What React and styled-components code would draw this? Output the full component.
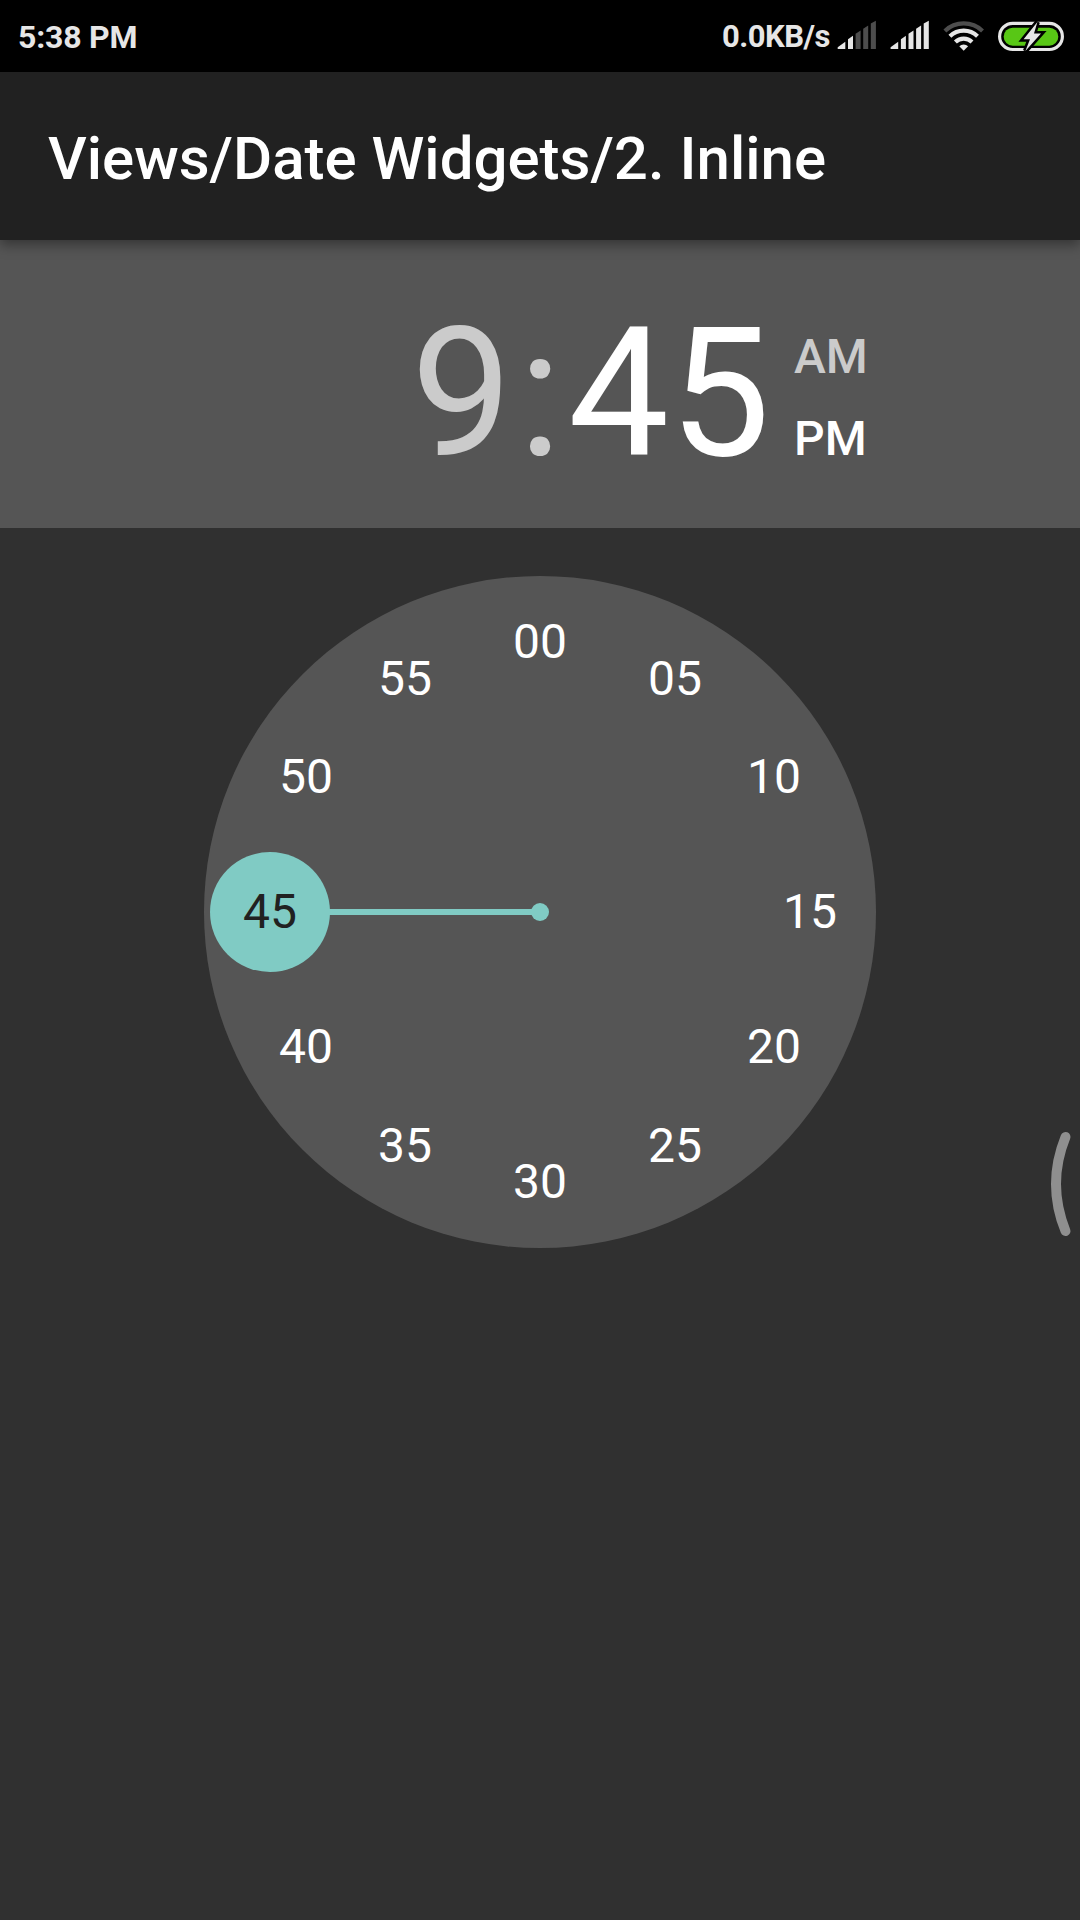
import React from "react";
import styled, { createGlobalStyle } from "styled-components";

const GlobalStyle = createGlobalStyle`
  body { margin: 0; background: #303030; }
  * { box-sizing: border-box; }
`;

const Screen = styled.div`
  display: flex;
  flex-direction: column;
  width: 1080px;
  height: 1920px;
  overflow: hidden;
  background: #303030;
  font-family: Roboto, "Noto Sans", sans-serif;
  color: #fff;
`;

const StatusBar = styled.header`
  display: flex;
  justify-content: space-between;
  flex: none;
  height: 72px;
  padding: 0 14px 0 18px;
  background: #000;
  color: #e6e6e6;
`;

const StatusText = styled.span`
  font-size: ${(p) => p.$size}px;
  line-height: ${(p) => p.$line}px;
  font-weight: 700;
  letter-spacing: ${(p) => p.$tracking}px;
  white-space: pre;
`;

const StatusGroup = styled.div`
  display: flex;
`;

const StatusIcons = styled.svg`
  display: block;
  margin-left: 4px;
`;

const AppBar = styled.div`
  display: flex;
  align-items: center;
  flex: none;
  height: 168px;
  padding: 6px 48px 0;
  background: #212121;
  box-shadow: 0 5px 12px rgba(0, 0, 0, 0.38);
  z-index: 1;
`;

const Title = styled.h1`
  margin: 0;
  font-size: 60px;
  line-height: 70px;
  font-weight: 500;
  white-space: nowrap;
`;

const TimeHeader = styled.section`
  display: flex;
  flex: none;
  height: 288px;
  padding: 48px 0 0 411px;
  background: #555;
`;

const TimePart = styled.span`
  font-size: 180px;
  line-height: 211px;
  width: ${(p) => p.$width}px;
  text-align: center;
  color: ${(p) => (p.$active ? "#fff" : "#cbcbcb")};
`;

const Meridiem = styled.div`
  display: flex;
  flex-direction: column;
  padding: 28px 0 0 24px;
`;

const MeridiemOption = styled.span`
  font-size: 48px;
  line-height: 82px;
  font-weight: 500;
  color: ${(p) => (p.$active ? "#fff" : "#cbcbcb")};
`;

const DialArea = styled.main`
  display: flex;
  justify-content: center;
  padding-top: 48px;
`;

const Dial = styled.svg`
  display: block;
`;

const DialNumber = styled.text`
  font-size: 48px;
  text-anchor: middle;
  fill: ${(p) => (p.$active ? "#212121" : "#fff")};
`;

const EdgeHandle = styled.svg`
  position: absolute;
  left: 1040px;
  top: 1120px;
`;

const minutes = ["00", "05", "10", "15", "20", "25", "30", "35", "40", "45", "50", "55"];

const Signal = ({ x, strength }) => (
  <g transform={`translate(${x} 0)`}>
    {[
      "M0 49V47.2L7.6 41.8V49Z",
      "M10.3 49V39.2L15.3 35.8V49Z",
      "M17.9 49V33.8L22.9 30.4V49Z",
      "M25.5 49V28.8L30.5 25.4V49Z",
      "M33.1 49V23.6L38.2 20.8V49Z",
    ].map((d, i) => (
      <path key={d} d={d} fill={i < strength ? "#e6e6e6" : "#4d4d4d"} />
    ))}
  </g>
);

export default function App() {
  return (
    <Screen>
      <GlobalStyle />
      <StatusBar>
        <StatusText $size={32} $line={74} $tracking={-0.2}>5:38 PM</StatusText>
        <StatusGroup>
          <StatusText $size={31} $line={73} $tracking={-0.5}>0.0KB/s</StatusText>
          <StatusIcons width="232" height="72" viewBox="834 0 232 72">
            <Signal x={837.7} strength={2} />
            <Signal x={890.6} strength={5} />
            <g fill="none" strokeWidth="4.2" stroke="#e6e6e6">
              <path d="M944.9 30.9A27.3 27.3 0 0 1 982.5 30.9" stroke="#4d4d4d" />
              <path d="M949.9 36.2A20 20 0 0 1 977.5 36.2" />
              <path d="M955.4 42A12 12 0 0 1 972 42" />
              <path d="M963.7 50.7L959.3 46.2A6.3 6.3 0 0 1 968.1 46.2Z" fill="#e6e6e6" stroke="none" />
            </g>
            <rect x="999.6" y="23.3" width="62.8" height="26.2" rx="13.1" fill="none" stroke="#e6e6e6" strokeWidth="3.2" />
            <rect x="1003.7" y="27.7" width="54.6" height="18" rx="9" fill="#58c715" />
            <path
              d="M1037.4 22L1023.6 39.2H1030L1025.4 51L1041 33.6H1034Z"
              fill="#e6e6e6"
              stroke="#000"
              strokeWidth="5"
              paintOrder="stroke"
            />
          </StatusIcons>
        </StatusGroup>
      </StatusBar>
      <AppBar>
        <Title>Views/Date Widgets/2. Inline</Title>
      </AppBar>
      <TimeHeader>
        <TimePart $width={101}>9</TimePart>
        <TimePart $width={56}>:</TimePart>
        <TimePart $width={202} $active>45</TimePart>
        <Meridiem>
          <MeridiemOption>AM</MeridiemOption>
          <MeridiemOption $active>PM</MeridiemOption>
        </Meridiem>
      </TimeHeader>
      <DialArea>
        <Dial width="672" height="672" viewBox="-336 -336 672 672">
          <circle r="336" fill="#555" />
          <g fill="#80cbc4">
            <rect x="-270" y="-3" width="270" height="6" />
            <circle r="9" />
            <circle cx="-270" r="60" />
          </g>
          {minutes.map((m, i) => {
            const a = (i * Math.PI) / 6;
            return (
              <DialNumber
                key={m}
                x={Math.round(270 * Math.sin(a))}
                y={Math.ceil(-270 * Math.cos(a) + 15.99)}
                $active={m === "45"}
              >
                {m}
              </DialNumber>
            );
          })}
        </Dial>
      </DialArea>
      <EdgeHandle width="40" height="130" viewBox="1040 1120 40 130">
        <path d="M1065.5 1137Q1046.5 1184 1065.5 1231" fill="none" stroke="#8f8f8f" strokeWidth="10" strokeLinecap="round" />
      </EdgeHandle>
    </Screen>
  );
}
